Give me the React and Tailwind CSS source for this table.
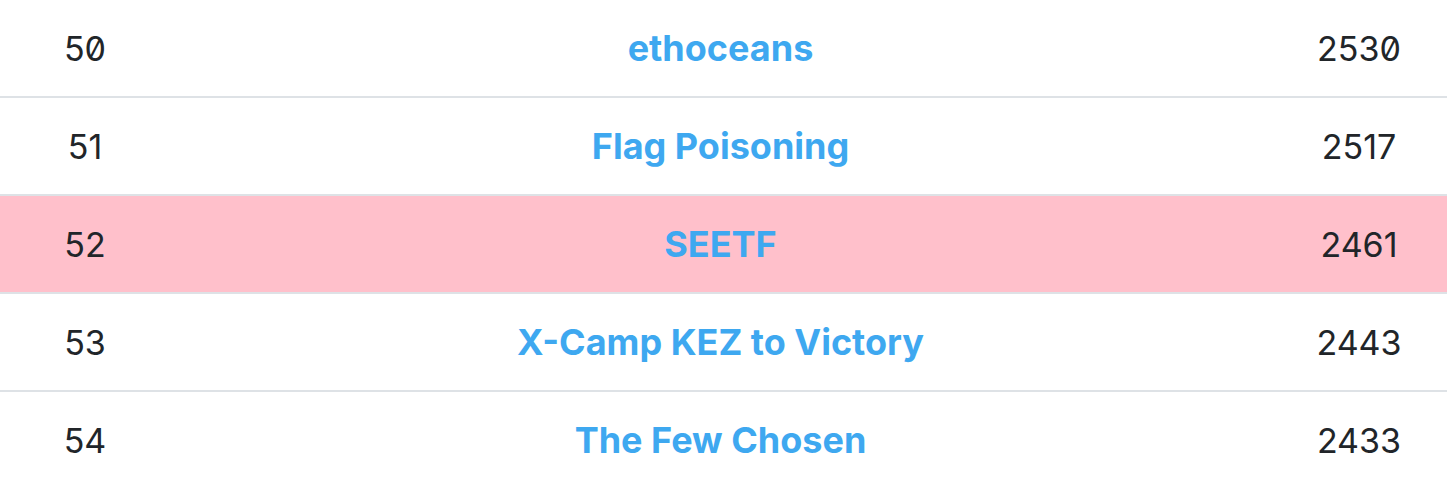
import React from 'react';

const rows = [
    { rank: 50, team: "ethoceans", score: 2530 },
    { rank: 51, team: "Flag Poisoning", score: 2517 },
    { rank: 52, team: "SEETF", score: 2461, highlight: true },
    { rank: 53, team: "X-Camp KEZ to Victory", score: 2443 },
    { rank: 54, team: "The Few Chosen", score: 2433 },
];

function App() {
    return (
        <div className="w-[1447px] bg-white font-['Inter',sans-serif] slashed-zero text-[#212529] text-[34px]">
            {rows.map((row) => (
                <div
                    key={row.rank}
                    className={
                        "grid grid-cols-[170px_1fr_176px] items-center h-[98px] border-b-2 border-[#dee2e6] " +
                        (row.highlight ? "bg-[#ffc0cb]" : "bg-white")
                    }
                >
                    <div className="text-center">{row.rank}</div>
                    <div className="text-center font-bold text-[36px] text-[#3ea8f0]">{row.team}</div>
                    <div className="text-center">{row.score}</div>
                </div>
            ))}
        </div>
    );
}

export default App;
